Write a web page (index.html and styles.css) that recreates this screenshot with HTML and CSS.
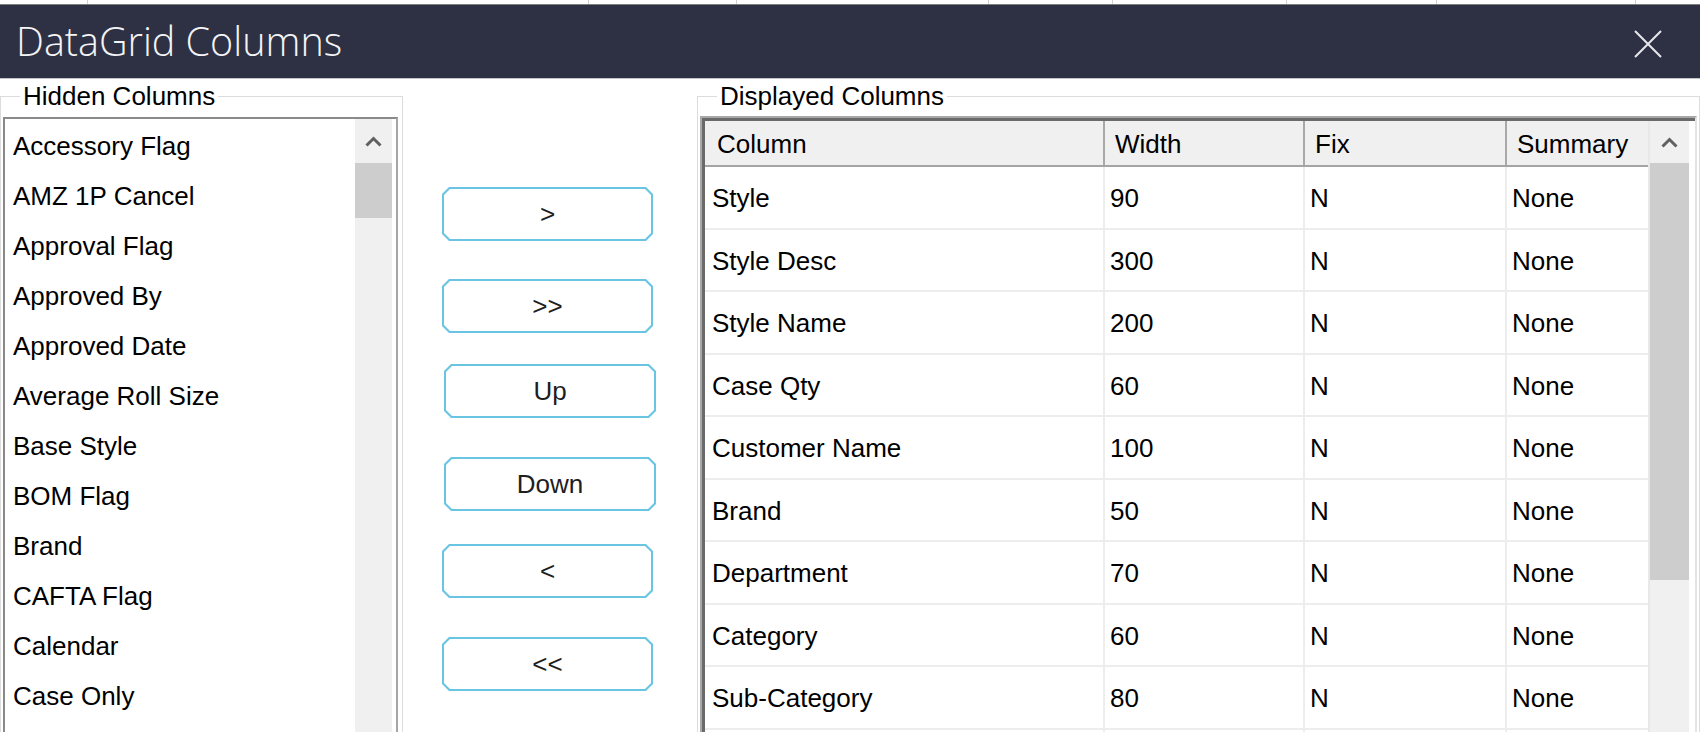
FILE: index.html
```html
<!DOCTYPE html>
<html lang="en">
<head>
<meta charset="utf-8">
<title>DataGrid Columns</title>
<link rel="stylesheet" href="styles.css">
</head>
<body>
  <div class="topstrip">
    <span class="ts"></span><span class="ts"></span><span class="ts"></span><span class="ts"></span>
    <span class="ts"></span><span class="ts"></span><span class="ts"></span><span class="ts"></span><span class="ts last"></span>
  </div>
  <header class="titlebar">
    <h1 class="title">DataGrid Columns</h1>
    <span class="close" aria-label="Close">
      <svg width="28" height="28" viewBox="0 0 28 28"><path d="M1 1 L27 27 M27 1 L1 27" stroke="#e8e8ec" stroke-width="2" fill="none"/></svg>
    </span>
  </header>
  <div class="divider"></div>
  <main class="content">
    <fieldset class="group group-hidden">
      <legend class="legend">Hidden Columns</legend>
      <div class="listbox">
        <ul class="items">
          <li>Accessory Flag</li>
          <li>AMZ 1P Cancel</li>
          <li>Approval Flag</li>
          <li>Approved By</li>
          <li>Approved Date</li>
          <li>Average Roll Size</li>
          <li>Base Style</li>
          <li>BOM Flag</li>
          <li>Brand</li>
          <li>CAFTA Flag</li>
          <li>Calendar</li>
          <li>Case Only</li>
        </ul>
        <div class="vscroll list-scroll">
          <div class="arrow"><svg width="17" height="11" viewBox="0 0 17 11"><polyline points="1.5,9.5 8.5,2.5 15.5,9.5" stroke="#606060" stroke-width="3" fill="none"/></svg></div>
          <div class="thumb list-thumb"></div>
        </div>
      </div>
    </fieldset>

    <div class="actions">
      <button class="btn btn-right"><span class="btn-face">&gt;</span></button>
      <button class="btn btn-all-right"><span class="btn-face">&gt;&gt;</span></button>
      <button class="btn btn-up wide"><span class="btn-face">Up</span></button>
      <button class="btn btn-down wide"><span class="btn-face">Down</span></button>
      <button class="btn btn-left"><span class="btn-face">&lt;</span></button>
      <button class="btn btn-all-left"><span class="btn-face">&lt;&lt;</span></button>
    </div>

    <fieldset class="group group-displayed">
      <legend class="legend">Displayed Columns</legend>
      <div class="grid-outer">
        <div class="grid">
          <div class="table">
            <div class="row head">
              <div class="cell c1">Column</div>
              <div class="cell c2">Width</div>
              <div class="cell c3">Fix</div>
              <div class="cell c4">Summary</div>
            </div>
            <div class="row"><div class="cell c1">Style</div><div class="cell c2">90</div><div class="cell c3">N</div><div class="cell c4">None</div></div>
            <div class="row"><div class="cell c1">Style Desc</div><div class="cell c2">300</div><div class="cell c3">N</div><div class="cell c4">None</div></div>
            <div class="row"><div class="cell c1">Style Name</div><div class="cell c2">200</div><div class="cell c3">N</div><div class="cell c4">None</div></div>
            <div class="row"><div class="cell c1">Case Qty</div><div class="cell c2">60</div><div class="cell c3">N</div><div class="cell c4">None</div></div>
            <div class="row"><div class="cell c1">Customer Name</div><div class="cell c2">100</div><div class="cell c3">N</div><div class="cell c4">None</div></div>
            <div class="row"><div class="cell c1">Brand</div><div class="cell c2">50</div><div class="cell c3">N</div><div class="cell c4">None</div></div>
            <div class="row"><div class="cell c1">Department</div><div class="cell c2">70</div><div class="cell c3">N</div><div class="cell c4">None</div></div>
            <div class="row"><div class="cell c1">Category</div><div class="cell c2">60</div><div class="cell c3">N</div><div class="cell c4">None</div></div>
            <div class="row"><div class="cell c1">Sub-Category</div><div class="cell c2">80</div><div class="cell c3">N</div><div class="cell c4">None</div></div>
            <div class="row"><div class="cell c1"></div><div class="cell c2"></div><div class="cell c3"></div><div class="cell c4"></div></div>
          </div>
          <div class="vscroll grid-scroll">
            <div class="arrow grid-arrow"><svg width="17" height="11" viewBox="0 0 17 11"><polyline points="1.5,9.5 8.5,2.5 15.5,9.5" stroke="#606060" stroke-width="3" fill="none"/></svg></div>
            <div class="thumb grid-thumb"></div>
          </div>
        </div>
      </div>
    </fieldset>
  </main>
</body>
</html>
```
FILE: styles.css
```css
* { box-sizing: border-box; }
html, body { margin: 0; padding: 0; }
body {
  width: 1700px;
  height: 732px;
  overflow: hidden;
  background: #ffffff;
  color: #000000;
  font-family: "Liberation Sans", Arial, sans-serif;
  font-size: 26px;
}

/* strip of the window behind the dialog */
.topstrip {
  display: grid;
  grid-template-columns: 88px 501px 148px 252px 124px 174px 150px 199px 1fr;
  height: 5px;
  border-bottom: 1px solid #7d7d7d;
  background: #ffffff;
}
.ts { border-right: 1px solid #d2d2d2; }
.ts.last { border-right: 0; }

/* title bar */
.titlebar {
  height: 73px;
  background: #2e3143;
  display: flex;
  align-items: center;
  justify-content: space-between;
  padding: 0 38px 0 16px;
}
.title {
  margin: 0;
  font-family: "Open Sans", "Liberation Sans", sans-serif;
  font-size: 39.5px;
  font-weight: 300;
  line-height: 1;
  color: #f4f4f6;
}
.close { display: flex; margin-top: 4px; }

.divider { height: 1px; background: #c4c4c4; }

.content {
  display: flex;
  height: 680px;
}

/* group boxes */
.group {
  margin: 4px 0 0 0;
  border: 1px solid #dcdcdc;
  min-width: 0;
}
.legend {
  margin-left: 17px;
  padding: 0 3px;
  font-size: 26px;
  line-height: 26px;
}
.group-hidden {
  width: 403px;
  flex: none;
  padding: 8px 4px 0 2px;
}
.group-displayed {
  flex: 1;
  padding: 7px 2px 0 2px;
}

/* list box */
.listbox {
  display: flex;
  height: 640px;
  border-style: solid;
  border-width: 2px;
  border-color: #8a8a8a #a6a6a6 #a6a6a6 #8a8a8a;
  background: #ffffff;
}
.items {
  list-style: none;
  margin: 0;
  padding: 2px 0 0 8px;
  flex: 1;
}
.items li {
  height: 50px;
  line-height: 50px;
  white-space: nowrap;
}
.vscroll {
  flex: none;
  background: #f0f0f0;
  display: flex;
  flex-direction: column;
}
.list-scroll {
  width: 37px;
  margin-right: 4px;
}
.arrow {
  height: 44px;
  display: flex;
  align-items: center;
  justify-content: center;
}
.thumb { background: #cdcdcd; }
.list-thumb { height: 55px; }

/* buttons column */
.actions {
  width: 294px;
  flex: none;
  display: flex;
  flex-direction: column;
  align-items: flex-start;
}
.btn {
  width: 211px;
  height: 54px;
  margin-left: 39px;
  padding: 2px;
  border: 0;
  background: #6ac5e2;
  clip-path: polygon(7px 0, calc(100% - 7px) 0, 100% 7px, 100% calc(100% - 7px), calc(100% - 7px) 100%, 7px 100%, 0 calc(100% - 7px), 0 7px);
  font-family: "Liberation Sans", Arial, sans-serif;
  font-size: 26px;
  color: #1e1e1e;
  cursor: default;
}
.btn.wide { width: 212px; margin-left: 41px; }
.btn-face {
  display: flex;
  align-items: center;
  justify-content: center;
  width: 100%;
  height: 100%;
  background: #ffffff;
  clip-path: polygon(6px 0, calc(100% - 6px) 0, 100% 6px, 100% calc(100% - 6px), calc(100% - 6px) 100%, 6px 100%, 0 calc(100% - 6px), 0 6px);
  padding-top: 1px;
}
.btn-right { margin-top: 108px; }
.btn-all-right { margin-top: 38px; }
.btn-up { margin-top: 31px; }
.btn-down { margin-top: 39px; }
.btn-left { margin-top: 33px; }
.btn-all-left { margin-top: 39px; }

/* data grid */
.grid-outer {
  border-top: 2px solid #a8a8a8;
  border-left: 2px solid #a8a8a8;
  border-right: 2px solid #e4e4e4;
  height: 640px;
}
.grid {
  display: flex;
  height: 100%;
  border-top: 3px solid #6a6a6a;
  border-left: 3px solid #6a6a6a;
  background: #ffffff;
}
.table {
  width: 945px;
  flex: none;
  border-right: 2px solid #e8e8e8;
}
.row {
  display: flex;
  height: 62.5px;
  border-bottom: 2px solid #ededed;
}
.cell {
  border-left: 2px solid #ededed;
  padding: 2px 0 0 5px;
  line-height: 58.5px;
  white-space: nowrap;
}
.c1 { width: 398px; border-left: 0; padding-left: 7px; }
.c2 { width: 200px; }
.c3 { width: 202px; }
.c4 { flex: 1; }

.row.head {
  height: 46px;
  background: #f0f0f0;
  border-bottom: 2px solid #a4a4a4;
}
.head .cell {
  line-height: 42px;
  padding-left: 10px;
  border-left: 2px solid #a9a9a9;
}
.head .c1 { border-left: 0; padding-left: 12px; }

.grid-scroll { width: 39px; }
.grid-arrow { height: 42px; }
.grid-thumb { height: 417px; }
```
